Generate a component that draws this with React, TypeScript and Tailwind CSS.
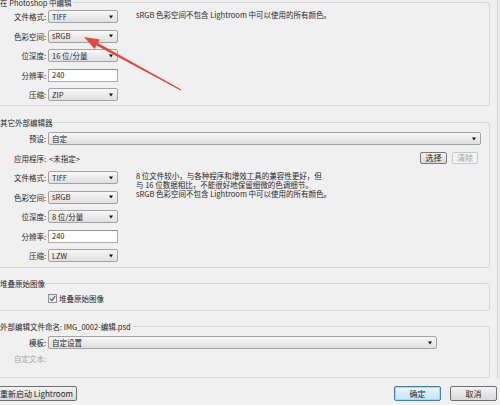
import React from "react";

function Arrow() {
  return (
    <span className="absolute right-[4px] top-1/2 h-0 w-0 -translate-y-1/2 border-t-[3px] border-r-[2.5px] border-l-[2.5px] border-t-[#111] border-r-transparent border-l-transparent" />
  );
}

function Sel({ text, className }: { text: string; className: string }) {
  return (
    <div
      className={`relative flex h-[13px] items-center rounded-[2px] border border-[#a3a3a3] bg-linear-to-b from-[#f7f7f7] to-[#e0e0e0] pl-[3px] leading-none ${className}`}
    >
      <span>{text}</span>
      <Arrow />
    </div>
  );
}

function Row({ label, children }: { label: string; children: React.ReactNode }) {
  return (
    <div className="flex h-[13px] items-center">
      <span className="w-[51px] text-right">{label}</span>
      <div className="ml-[2px]">{children}</div>
    </div>
  );
}

function Field({ text }: { text: string }) {
  return (
    <div className="flex h-[13px] w-[70px] items-center border border-[#abadb3] border-t-[#8c8f96] bg-white pl-[3px] leading-none">
      {text}
    </div>
  );
}

function SmallBtn({ text, disabled }: { text: string; disabled?: boolean }) {
  return disabled ? (
    <div className="flex h-[12px] w-[26px] items-center justify-center rounded-[2px] border border-[#cacaca] bg-[#f4f4f4] text-[8px] leading-none text-[#a9a9a9]">
      {text}
    </div>
  ) : (
    <div className="flex h-[12px] w-[27px] items-center justify-center rounded-[2px] border border-[#7a7a7a] bg-linear-to-b from-[#f4f4f4] to-[#dadada] text-[8px] leading-none">
      {text}
    </div>
  );
}

const fs =
  "m-0 w-[496px] min-w-0 rounded-[3px] border border-[#d2d7da] p-0";

export default function App() {
  return (
    <div className="relative h-[405px] w-[500px] overflow-hidden bg-[#f0f0f0] font-['Noto_Sans_CJK_SC','Liberation_Sans',sans-serif] text-[7.5px] leading-[11px] text-[#262626]">
      <div className="-mt-[3px] -ml-[6px] w-[504px] border-r border-[#d0d0d0]">
        {/* Group 1 */}
        <fieldset className={`${fs} pb-[4px]`}>
          <legend className="ml-[4px] px-[1px]">在 Photoshop 中编辑</legend>
          <div className="flex pt-[2px]">
            <div className="flex flex-col gap-[6.5px]">
              <Row label="文件格式:">
                <Sel text="TIFF" className="w-[70px]" />
              </Row>
              <Row label="色彩空间:">
                <Sel text="sRGB" className="w-[70px]" />
              </Row>
              <Row label="位深度:">
                <Sel text="16 位/分量" className="w-[70px]" />
              </Row>
              <Row label="分辨率:">
                <Field text="240" />
              </Row>
              <Row label="压缩:">
                <Sel text="ZIP" className="w-[70px]" />
              </Row>
            </div>
            <div className="ml-[18px] leading-[9px]">
              sRGB 色彩空间不包含 Lightroom 中可以使用的所有颜色。
            </div>
          </div>
        </fieldset>

        {/* Group 2 */}
        <fieldset className={`${fs} mt-[11px] pb-[5px]`}>
          <legend className="ml-[4px] px-[1px]">其它外部编辑器</legend>
          <div className="pt-[4px]">
            <Row label="预设:">
              <Sel text="自定" className="w-[433px]" />
            </Row>
            <div className="mt-[7px] flex h-[12px] items-center">
              <span className="w-[51px] text-right">应用程序:</span>
              <span className="ml-[3px]">&lt;未指定&gt;</span>
              <div className="mr-[11px] ml-auto flex gap-[5px]">
                <SmallBtn text="选择" />
                <SmallBtn text="清除" disabled />
              </div>
            </div>
            <div className="mt-[7px] flex">
              <div className="flex flex-col gap-[6.5px]">
                <Row label="文件格式:">
                  <Sel text="TIFF" className="w-[70px]" />
                </Row>
                <Row label="色彩空间:">
                  <Sel text="sRGB" className="w-[70px]" />
                </Row>
                <Row label="位深度:">
                  <Sel text="8 位/分量" className="w-[70px]" />
                </Row>
                <Row label="分辨率:">
                  <Field text="240" />
                </Row>
                <Row label="压缩:">
                  <Sel text="LZW" className="w-[70px]" />
                </Row>
              </div>
              <div className="ml-[18px] leading-[9px]">
                8 位文件较小，与各种程序和增效工具的兼容性更好，但
                <br />
                与 16 位数据相比，不能很好地保留细微的色调细节。
                <br />
                sRGB 色彩空间不包含 Lightroom 中可以使用的所有颜色。
              </div>
            </div>
          </div>
        </fieldset>

        {/* Group 3 */}
        <fieldset className={`${fs} mt-[10px] pb-[7px]`}>
          <legend className="ml-[4px] px-[1px]">堆叠原始图像</legend>
          <div className="mt-[5px] flex h-[9px] items-center">
            <span className="w-[53px]" />
            <span className="flex h-[9px] w-[9px] items-center justify-center border border-[#8e8f8f] bg-linear-to-br from-[#dedede] to-[#fbfbfb]">
              <svg viewBox="0 0 7 7" className="h-[7px] w-[7px]">
                <path
                  d="M1 3.6 L2.9 5.5 L6.2 1.2"
                  stroke="#4a5a72"
                  strokeWidth="1.2"
                  fill="none"
                />
              </svg>
            </span>
            <span className="ml-[2px]">堆叠原始图像</span>
          </div>
        </fieldset>

        {/* Group 4 */}
        <fieldset className={`${fs} mt-[10px] pb-[13px]`}>
          <legend className="ml-[4px] px-[1px]">
            外部编辑文件命名: IMG_0002-编辑.psd
          </legend>
          <div className="mt-[4px]">
            <Row label="模板:">
              <Sel text="自定设置" className="w-[389px]" />
            </Row>
          </div>
          <div className="mt-[4px] flex h-[11px] items-center text-[#a8a8a8]">
            <span className="w-[51px] text-right">自定文本:</span>
          </div>
        </fieldset>
      </div>

      {/* Bottom buttons */}
      <div className="mt-[8px] -ml-[6px] flex w-[504px] items-center pr-[1px]">
        <div className="ml-[2px] flex h-[15px] w-[81px] items-center justify-center rounded-[2px] border border-[#707070] bg-linear-to-b from-[#f3f3f3] to-[#dadada] text-[8px] leading-none">
          重新启动 Lightroom
        </div>
        <div className="ml-auto flex gap-[9px]">
          <div className="flex h-[15px] w-[47px] items-center justify-center rounded-[2px] border border-[#3c7fb1] bg-linear-to-b from-[#eaf6fd] to-[#bee6fd] text-[8px] leading-none shadow-[inset_0_0_0_1px_#a7d9f5]">
            确定
          </div>
          <div className="flex h-[15px] w-[47px] items-center justify-center rounded-[2px] border border-[#707070] bg-linear-to-b from-[#f3f3f3] to-[#dadada] text-[8px] leading-none">
            取消
          </div>
        </div>
      </div>

      {/* Red annotation arrow */}
      <svg
        className="pointer-events-none absolute top-0 left-0 h-[405px] w-[500px]"
        viewBox="0 0 500 405"
      >
        <polygon
          points="84,37 99.8,39.4 97.9,42.9 181.3,89.5 180.7,90.5 96.5,45.5 94.6,49 "
          fill="#e5483d"
        />
      </svg>
    </div>
  );
}
